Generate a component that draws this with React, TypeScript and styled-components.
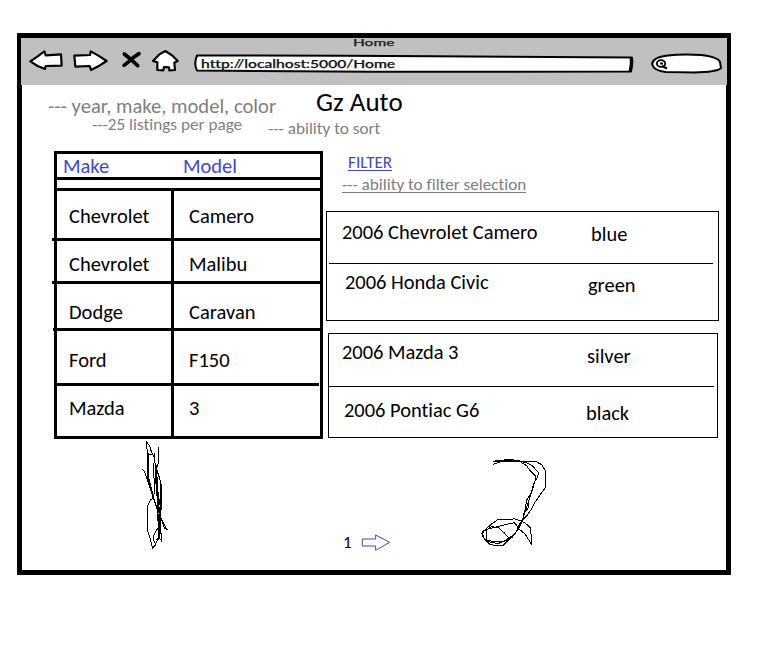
import React from 'react';
import styled, { createGlobalStyle } from 'styled-components';

const Global = createGlobalStyle`
  * { box-sizing: border-box; }
  body {
    margin: 0;
    background: #fff;
    color: #000;
    font-family: Carlito, Calibri, Lato, sans-serif;
    font-variant-ligatures: none;
  }
  svg { display: block; flex: none; }
`;

const Page = styled.div`
  width: 773px;
  height: 648px;
  padding: 33px 17px;
`;

const Browser = styled.div`
  width: 714px;
  height: 542px;
  border: 5px solid #000;
`;

const Chrome = styled.header`
  height: 47px;
  margin: 0 -1px;
  background: #c0c0c0;
  font-family: Lato, sans-serif;
`;

const WindowTitle = styled.div`
  width: 41px;
  height: 10px;
  margin-left: 332px;
  font-size: 9.5px;
  font-weight: 500;
  line-height: 9px;
  color: #222;
  -webkit-text-stroke: 0.25px #222;
  transform: scaleX(1.63);
  transform-origin: 0 0;
`;

const Toolbar = styled.div`
  display: flex;
  align-items: flex-start;
  padding-left: 7px;
`;

const NavIcons = styled.div`
  display: grid;
  grid-template-columns: 45px 48px 30px 42px;
  width: 165px;
`;

const Field = styled.div<{ $width: number; $gap?: number }>`
  position: relative;
  width: ${p => p.$width}px;
  height: 24px;
  margin-left: ${p => p.$gap ?? 0}px;
`;

const FieldShape = styled.svg`
  position: absolute;
  inset: 0;
`;

const Address = styled.div`
  position: relative;
  width: max-content;
  margin-left: 8px;
  padding-top: 9px;
  font-size: 11px;
  font-weight: 500;
  line-height: 14px;
  color: #111;
  -webkit-text-stroke: 0.25px #111;
  transform: scaleX(1.42);
  transform-origin: 0 0;
`;

const NoteRow = styled.div<{ $height: number; $left: number }>`
  display: flex;
  align-items: flex-start;
  height: ${p => p.$height}px;
  padding-left: ${p => p.$left}px;
`;

const Note = styled.div<{ $width: number; $top: number; $large?: boolean }>`
  width: ${p => p.$width}px;
  padding-top: ${p => p.$top}px;
  font-size: ${p => (p.$large ? 20.6 : 17.2)}px;
  line-height: ${p => (p.$large ? 20 : 18)}px;
  white-space: nowrap;
  color: #7f7f7f;
`;

const SiteTitle = styled.h1`
  margin: 0;
  padding-top: 1px;
  font-size: 27px;
  font-weight: 400;
  line-height: 32px;
`;

const Columns = styled.main`
  display: flex;
  height: 288px;
  padding-left: 32px;
`;

const Table = styled.div`
  width: 269px;
  height: 288px;
  border: 3px solid #000;
  font-size: 20.5px;
  line-height: 20px;
`;

const TableHead = styled.div`
  display: grid;
  grid-template-columns: 120px 1fr;
  height: 26px;
  padding: 2px 0 0 6px;
  border-bottom: 3px solid #000;
  color: #3f48cc;
`;

const Spacer = styled.div`
  height: 11px;
  border-bottom: 3px solid #000;
`;

const TableRow = styled.div<{ $height: number; $overhang: number; $inset?: number }>`
  display: grid;
  grid-template-columns: 117px 1fr;
  height: ${p => p.$height}px;
  margin-left: ${p => -p.$overhang}px;
  margin-right: ${p => p.$inset ?? 0}px;
  padding-left: ${p => p.$overhang}px;
  border-bottom: 3px solid #000;

  &:last-child { border-bottom: 0; }
`;

const Cell = styled.div<{ $top: number }>`
  padding: ${p => p.$top}px 0 0 15px;

  &:first-child {
    padding-left: 12px;
    border-right: 3px solid #000;
    margin-bottom: -3px;
  }
`;

const Results = styled.section`
  width: 396px;
  margin-left: 3px;
`;

const Filter = styled.div`
  height: 60px;
  padding-top: 2px;
  font-size: 17.15px;
  line-height: 20px;
`;

const FilterLine = styled.div<{ $left: number; $color: string }>`
  width: max-content;
  height: 18px;
  margin: 0 0 4px ${p => p.$left}px;
  color: ${p => p.$color};
  border-bottom: 1px solid ${p => p.$color};
`;

const Card = styled.div<{ $left: number; $width: number; $height: number }>`
  width: ${p => p.$width}px;
  height: ${p => p.$height}px;
  margin: 0 0 12px ${p => p.$left}px;
  border: 1px solid #000;
  font-size: 20.45px;
  line-height: 20px;
`;

const Listing = styled.div<{ $height: number }>`
  display: flex;
  height: ${p => p.$height}px;
`;

const Vehicle = styled.div<{ $left: number; $top: number; $width: number }>`
  width: ${p => p.$width}px;
  padding: ${p => p.$top}px 0 0 ${p => p.$left}px;
  white-space: nowrap;
`;

const Color = styled.div<{ $top: number }>`
  padding: ${p => p.$top}px 0 0 1px;
`;

const Divider = styled.div<{ $left: number; $right: number }>`
  height: 1px;
  margin: 0 ${p => p.$right}px 0 ${p => p.$left}px;
  background: #000;
`;

const Footer = styled.footer`
  display: flex;
  align-items: flex-start;
  padding: 1px 0 0 118px;
`;

const Pager = styled.div`
  display: flex;
  gap: 9px;
  width: 137px;
  margin-left: 173px;
  padding-top: 93px;
  font-size: 17.15px;
  line-height: 20px;
`;

const Second = styled.div`
  padding-top: 18px;
`;

const ink = { fill: 'none', stroke: '#000', strokeWidth: 3, shapeRendering: 'crispEdges' } as const;
const chrome = { fill: '#fff', stroke: '#000', strokeWidth: 6.5, strokeLinejoin: 'round', strokeLinecap: 'round' } as const;

const makes = [
  { make: 'Chevrolet', model: 'Camero', height: 50, top: 15, overhang: 5 },
  { make: 'Chevrolet', model: 'Malibu', height: 43, top: 13, overhang: 5 },
  { make: 'Dodge', model: 'Caravan', height: 47, top: 18, overhang: 4 },
  { make: 'Ford', model: 'F150', height: 55, top: 19, overhang: 0, inset: 1 },
  { make: 'Mazda', model: '3', height: 50, top: 12, overhang: 0 },
];

function BrowserChrome() {
  return (
    <Chrome>
      <WindowTitle>Home</WindowTitle>
      <Toolbar>
        <NavIcons>
          <svg width="36" height="27" viewBox="54 60 108 81">
            <path {...chrome} d="M61 100 L83 85 L103 70 L107 82 L153 79 L155 113 L107 114 L105 123 L83 114 Z" />
          </svg>
          <svg width="36" height="27" viewBox="189 60 108 81">
            <path {...chrome} d="M193 83 L240 81 L242 70 L264 82 L290 99 L268 113 L243 126 L239 114 L196 116 Z" />
          </svg>
          <svg width="22" height="27" viewBox="334 60 66 81">
            <path fill="none" stroke="#000" strokeWidth="11" strokeLinecap="round" d="M344 78 L362 93 L384 113 M388 77 Q370 88 360 99 L343 112" />
          </svg>
          <svg width="30" height="27" viewBox="423 60 90 81">
            <path {...chrome} d="M429 99 L447 80 L466 69 L486 82 L503 99 L493 104 L495 126 L478 127 L477 118 L462 117 L460 127 L442 126 L442 103 Z" />
          </svg>
        </NavIcons>
        <Field $width={442}>
          <FieldShape width="442" height="27" viewBox="0 0 442 27">
            <path fill="#fff" stroke="#000" strokeWidth="2" strokeLinejoin="round" d="M4 7.5 Q120 7.2 240 8.2 L439 9.5 Q440 15 438 23.5 Q300 24 180 23.8 L4 22.5 Q.5 16 4 7.5 Z" />
            <path fill="none" stroke="#000" strokeWidth="3" d="M438 10 Q439 15 437 23" />
          </FieldShape>
          <Address>http://localhost:5000/Home</Address>
        </Field>
        <Field $width={72} $gap={15}>
          <FieldShape width="72" height="27" viewBox="0 0 72 27">
            <path fill="#fff" stroke="#000" strokeWidth="2" d="M2 16 Q3 9 18 7.5 Q32 6 51 7 Q68 9 70 14 L71 20 Q67 24 44 24.5 Q25 24 16 24 Q4 23 2 16 Z" />
            <ellipse cx="11" cy="15.5" rx="4.2" ry="3.4" fill="none" stroke="#000" strokeWidth="1.8" />
            <path fill="none" stroke="#000" strokeWidth="2" d="M10 15.5 h3 M12 18 L17 20.5" />
          </FieldShape>
        </Field>
      </Toolbar>
    </Chrome>
  );
}

export default function App() {
  return (
    <Page>
      <Global />
      <Browser>
        <BrowserChrome />
        <NoteRow $height={30} $left={26}>
          <Note $large $width={268} $top={11}>--- year, make, model, color</Note>
          <SiteTitle>Gz Auto</SiteTitle>
        </NoteRow>
        <NoteRow $height={36} $left={70}>
          <Note $width={176} $top={1}>---25 listings per page</Note>
          <Note $width={120} $top={5}>--- ability to sort</Note>
        </NoteRow>
        <Columns>
          <Table>
            <TableHead>
              <span>Make</span>
              <span>Model</span>
            </TableHead>
            <Spacer />
            {makes.map((r, i) => (
              <TableRow key={i} $height={r.height} $overhang={r.overhang} $inset={r.inset}>
                <Cell $top={r.top}>{r.make}</Cell>
                <Cell $top={r.top}>{r.model}</Cell>
              </TableRow>
            ))}
          </Table>
          <Results>
            <Filter>
              <FilterLine $left={22} $color="#3f48cc">FILTER</FilterLine>
              <FilterLine $left={16} $color="#7f7f7f">--- ability to filter selection</FilterLine>
            </Filter>
            <Card $left={0} $width={393} $height={110}>
              <Listing $height={51}>
                <Vehicle $left={15} $top={10} $width={263}>2006 Chevrolet Camero</Vehicle>
                <Color $top={12}>blue</Color>
              </Listing>
              <Divider $left={2} $right={5} />
              <Listing $height={56}>
                <Vehicle $left={18} $top={8} $width={260}>2006 Honda Civic</Vehicle>
                <Color $top={11}>green</Color>
              </Listing>
            </Card>
            <Card $left={2} $width={390} $height={105}>
              <Listing $height={52}>
                <Vehicle $left={13} $top={8} $width={257}>2006 Mazda 3</Vehicle>
                <Color $top={12}>silver</Color>
              </Listing>
              <Divider $left={0} $right={3} />
              <Listing $height={50}>
                <Vehicle $left={15} $top={13} $width={256}>2006 Pontiac G6</Vehicle>
                <Color $top={16}>black</Color>
              </Listing>
            </Card>
          </Results>
        </Columns>
        <Footer>
          <svg width="30" height="110" viewBox="60 30 90 330">
            <path {...ink} d="M67 118 L73 124 L82 148 L92 180 L104 214 L118 252 L130 280 L142 300 L133 294 L124 268 L110 232 L98 200 L88 160 L84 110 L82 68 L79 35 L89 48 L95 68 L103 82 L103 70 L101 130 L104 170 L101 205 L91 210 L82 230 L82 298 L90 325 L98 355 L107 344 L101 332 L101 318 L109 300 L119 290 L119 320 L107 340" />
            <path {...ink} d="M116 52 V96 L110 115 L109 160 L117 230 L122 285 L124 332 L115 320 L119 260 L110 190 L106 130 L105 98 M84 70 L91 74 L98 74 M86 70 L86 152 L97 190 L112 240 L117 320 L110 330 M107 110 L116 136 L123 160 L125 210 L121 270 L124 330 M113 140 V180 L120 225" />
            <path {...ink} d="M88 150 L100 200 L113 245 M108 105 L112 200 L116 300 M121 150 L123 250 M83 80 V150" />
          </svg>
          <Pager>
            <span>1</span>
            <svg width="30" height="20" viewBox="93 280 90 60">
              <path d="M97 298 H137 V286 L179 308 L137 332 V319 H97 Z" fill="none" stroke="#3f48cc" strokeWidth="3" />
            </svg>
          </Pager>
          <Second>
            <svg width="69" height="89" viewBox="450 54 207 267">
              <path {...ink} d="M488 74 L500 69 L518 63 L550 61 L572 66 L590 77 L600 92 L617 109 L615 124 L605 155 L595 185 L585 215 L577 245 L566 267 L550 285 L530 299 L504 311 L474 305 L460 293 L455 280 L460 273 L477 266 L552 248 L560 256 L568 268 L585 282 L604 312 V290 L601 264 L590 253 L575 243 L552 236 L540 239 H503 L485 252 L463 271 L457 281 L463 297 L480 313 L503 318 L520 316 L540 295 L558 276 L570 250 L592 225 L604 208 L613 190 L628 168 L646 143 V92 L635 74 L618 65 H488" />
              <path {...ink} d="M523 59 H548 L572 65 L590 68 L609 79 L625 98 L623 111 L613 126 L603 160 L590 180 L585 212 L578 238 L565 268 L548 290 L520 305 H490 L470 300 V270 L484 260 L505 263 L522 278 L535 292 L548 292 M494 62 H570 M599 165 L594 205 L580 222" />
            </svg>
          </Second>
        </Footer>
      </Browser>
    </Page>
  );
}
